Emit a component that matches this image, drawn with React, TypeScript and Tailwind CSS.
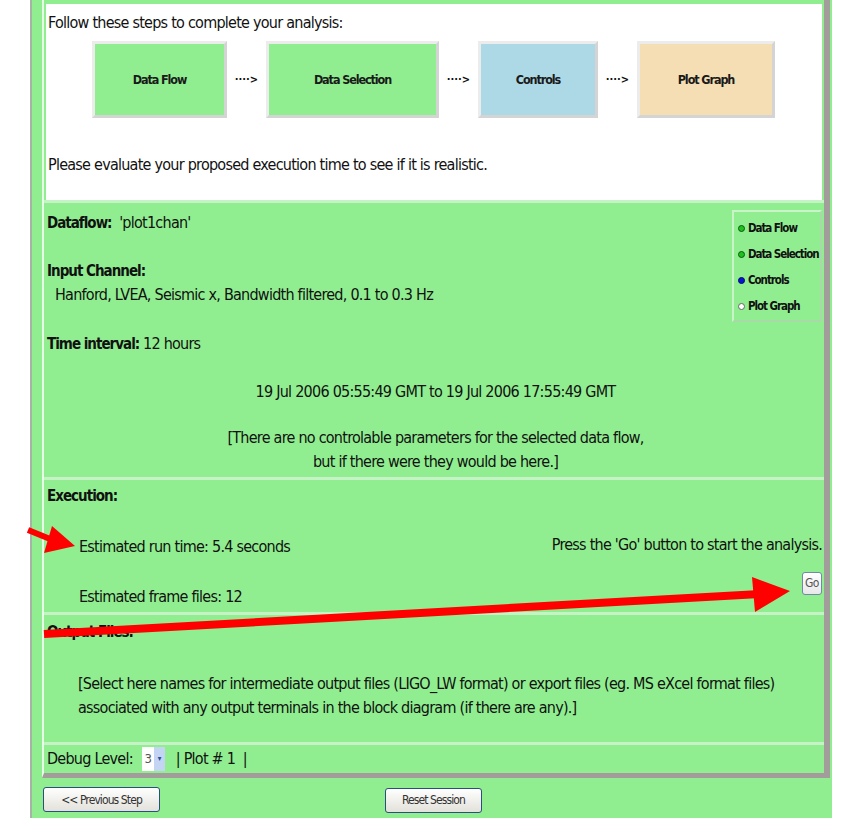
const STEPS = [
  { label: 'Data Flow', w: 'w-[135px]', bg: 'bg-[#90ee90]' },
  { label: 'Data Selection', w: 'w-[173px]', bg: 'bg-[#90ee90]' },
  { label: 'Controls', w: 'w-[120px]', bg: 'bg-[#add8e6]' },
  { label: 'Plot Graph', w: 'w-[138px]', bg: 'bg-[#f5deb3]' },
]

const LEGEND = [
  { label: 'Data Flow', dot: 'bg-[#1fc01f] border-[#0a5a0a]' },
  { label: 'Data Selection', dot: 'bg-[#1fc01f] border-[#0a5a0a]' },
  { label: 'Controls', dot: 'bg-[#0a14d0] border-[#000870]' },
  { label: 'Plot Graph', dot: 'bg-white border-[#666]' },
]

function StepBox({ label, w, bg }: { label: string; w: string; bg: string }) {
  return (
    <div
      className={`${w} ${bg} h-[77px] flex items-center justify-center border-[3px] border-t-[#ececec] border-l-[#ececec] border-r-[#d4d4d4] border-b-[#d4d4d4] text-[12.5px] tracking-[-1.1px] font-bold text-[#1a1a1a]`}
    >
      {label}
    </div>
  )
}

function XpButton({ children, w }: { children: React.ReactNode; w: string }) {
  return (
    <button
      className={`${w} h-[25px] rounded-[3px] border border-[#2a4f7e] bg-linear-to-b from-white to-[#e2e1da] text-[12px] tracking-[-0.9px] text-[#333] leading-none`}
    >
      {children}
    </button>
  )
}

export default function App() {
  return (
    <div className="relative w-[850px] h-[818px] overflow-hidden bg-white text-[16px] leading-[24px] tracking-[-0.75px] text-[#111] font-['Liberation_Sans_Narrow','DejaVu_Sans_Condensed','Liberation_Sans',sans-serif]">
      {/* Outer green frame */}
      <div className="ml-[30px] w-[802px] h-[818px] border-l-2 border-[#a6b4a6] bg-[#90ee90] pl-[10px] pr-[2px]">
        {/* Inner panel */}
        <div className="border-l-2 border-l-[#e6fce6] border-r-[6px] border-r-[#a29d9a] border-b-[5px] border-b-[#a29d9a]">
          {/* ── Steps ── */}
          <div className="bg-white border-t-[4px] border-x-2 border-[#90ee90] pl-[2px] pt-[7px] h-[200px]">
            <div>Follow these steps to complete your analysis:</div>
            <div className="flex items-center mt-[6px] ml-[44px]">
              {STEPS.map((s, i) => (
                <div key={s.label} className="flex items-center">
                  {i > 0 && (
                    <span className="w-[39px] text-center text-[11px] tracking-normal font-bold leading-none">····&gt;</span>
                  )}
                  <StepBox {...s} />
                </div>
              ))}
            </div>
            <div className="mt-[35px]">Please evaluate your proposed execution time to see if it is realistic.</div>
          </div>

          {/* ── Dataflow details ── */}
          <div className="border-t-[3px] border-[#c6f3c6] pl-[3px] pt-[8px] h-[277px]">
            <div className="float-right -mt-[1px] mr-[2px] w-[90px] h-[112px] border-2 border-t-[#c8f4c8] border-l-[#c8f4c8] border-r-[#a9d9a9] border-b-[#a9d9a9] pt-[3px] pl-[4px]">
              {LEGEND.map((l) => (
                <div key={l.label} className="flex items-center gap-[3px] h-[26px] text-[11.5px] tracking-[-1.05px] font-bold whitespace-nowrap">
                  <span className={`shrink-0 w-[7px] h-[7px] rounded-full border ${l.dot}`} />
                  {l.label}
                </div>
              ))}
            </div>
            <div>
              <b className="text-[15px] tracking-[-1px]">Dataflow:</b>&nbsp; 'plot1chan'
            </div>
            <div className="mt-[24px] font-bold text-[15px] tracking-[-1px]">Input Channel:</div>
            <div className="pl-[8px]">Hanford, LVEA, Seismic x, Bandwidth filtered, 0.1 to 0.3 Hz</div>
            <div className="mt-[25px]">
              <b className="text-[15px] tracking-[-1px]">Time interval:</b> 12 hours
            </div>
            <div className="mt-[24px] text-center">19 Jul 2006 05:55:49 GMT to 19 Jul 2006 17:55:49 GMT</div>
            <div className="mt-[22px] text-center">
              [There are no controlable parameters for the selected data flow,
              <br />
              but if there were they would be here.]
            </div>
          </div>

          {/* ── Execution ── */}
          <div className="border-t-[3px] border-[#c6f3c6] pl-[3px] pr-[2px] pt-[4px] h-[135px]">
            <div className="font-bold text-[15px] tracking-[-1px]">Execution:</div>
            <div className="mt-[27px] flex justify-between items-center">
              <span className="pl-[32px]">Estimated run time: 5.4 seconds</span>
              <span className="-mt-[4px]">Press the 'Go' button to start the analysis.</span>
            </div>
            <div className="mt-[26px] flex justify-between items-center">
              <span className="pl-[32px]">Estimated frame files: 12</span>
              <button className="w-[20px] h-[23px] -mt-[28px] rounded-[3px] border border-[#7388a6] bg-linear-to-b from-white to-[#e8e8ea] text-[12px] tracking-[-0.5px] text-[#555] leading-none">
                Go
              </button>
            </div>
          </div>

          {/* ── Output files ── */}
          <div className="border-t-[3px] border-[#c6f3c6] pl-[3px] pt-[5px] h-[130px]">
            <div className="font-bold text-[15px] tracking-[-1px]">Output Files:</div>
            <div className="mt-[28px] pl-[31px]">
              [Select here names for intermediate output files (LIGO_LW format) or export files (eg. MS eXcel format files)
              <br />
              associated with any output terminals in the block diagram (if there are any).]
            </div>
          </div>

          {/* ── Debug ── */}
          <div className="border-t-[3px] border-[#c6f3c6] pl-[3px] h-[31px] flex items-center">
            <span>Debug Level:</span>
            <span className="ml-[9px] w-[23px] h-[24px] flex items-center bg-white">
              <span className="w-[12px] text-[13px] text-[#555] text-center">3</span>
              <span className="flex-1 h-full bg-[#c3d5f2] flex items-center justify-center text-[8px] text-[#2d4f9a]">▾</span>
            </span>
            <span className="ml-[11px]">| Plot # 1&nbsp; |</span>
          </div>
        </div>

        {/* Nav buttons */}
        <div className="flex mt-[9px] ml-[1px]">
          <XpButton w="w-[117px]">&lt;&lt; Previous Step</XpButton>
          <div className="ml-[225px]">
            <XpButton w="w-[97px]">Reset Session</XpButton>
          </div>
        </div>
      </div>

      {/* Red annotation arrows drawn over the page */}
      <svg className="absolute inset-0 pointer-events-none" width="850" height="818" viewBox="0 0 850 818">
        <line x1="28" y1="530" x2="55" y2="541" stroke="#ff0000" strokeWidth="6" />
        <polygon points="52,526 75,546 44,553" fill="#ff0000" />
        <line x1="44" y1="634" x2="760" y2="594" stroke="#ff0000" strokeWidth="8" />
        <polygon points="752,577 790,591 755,612" fill="#ff0000" />
      </svg>
    </div>
  )
}
